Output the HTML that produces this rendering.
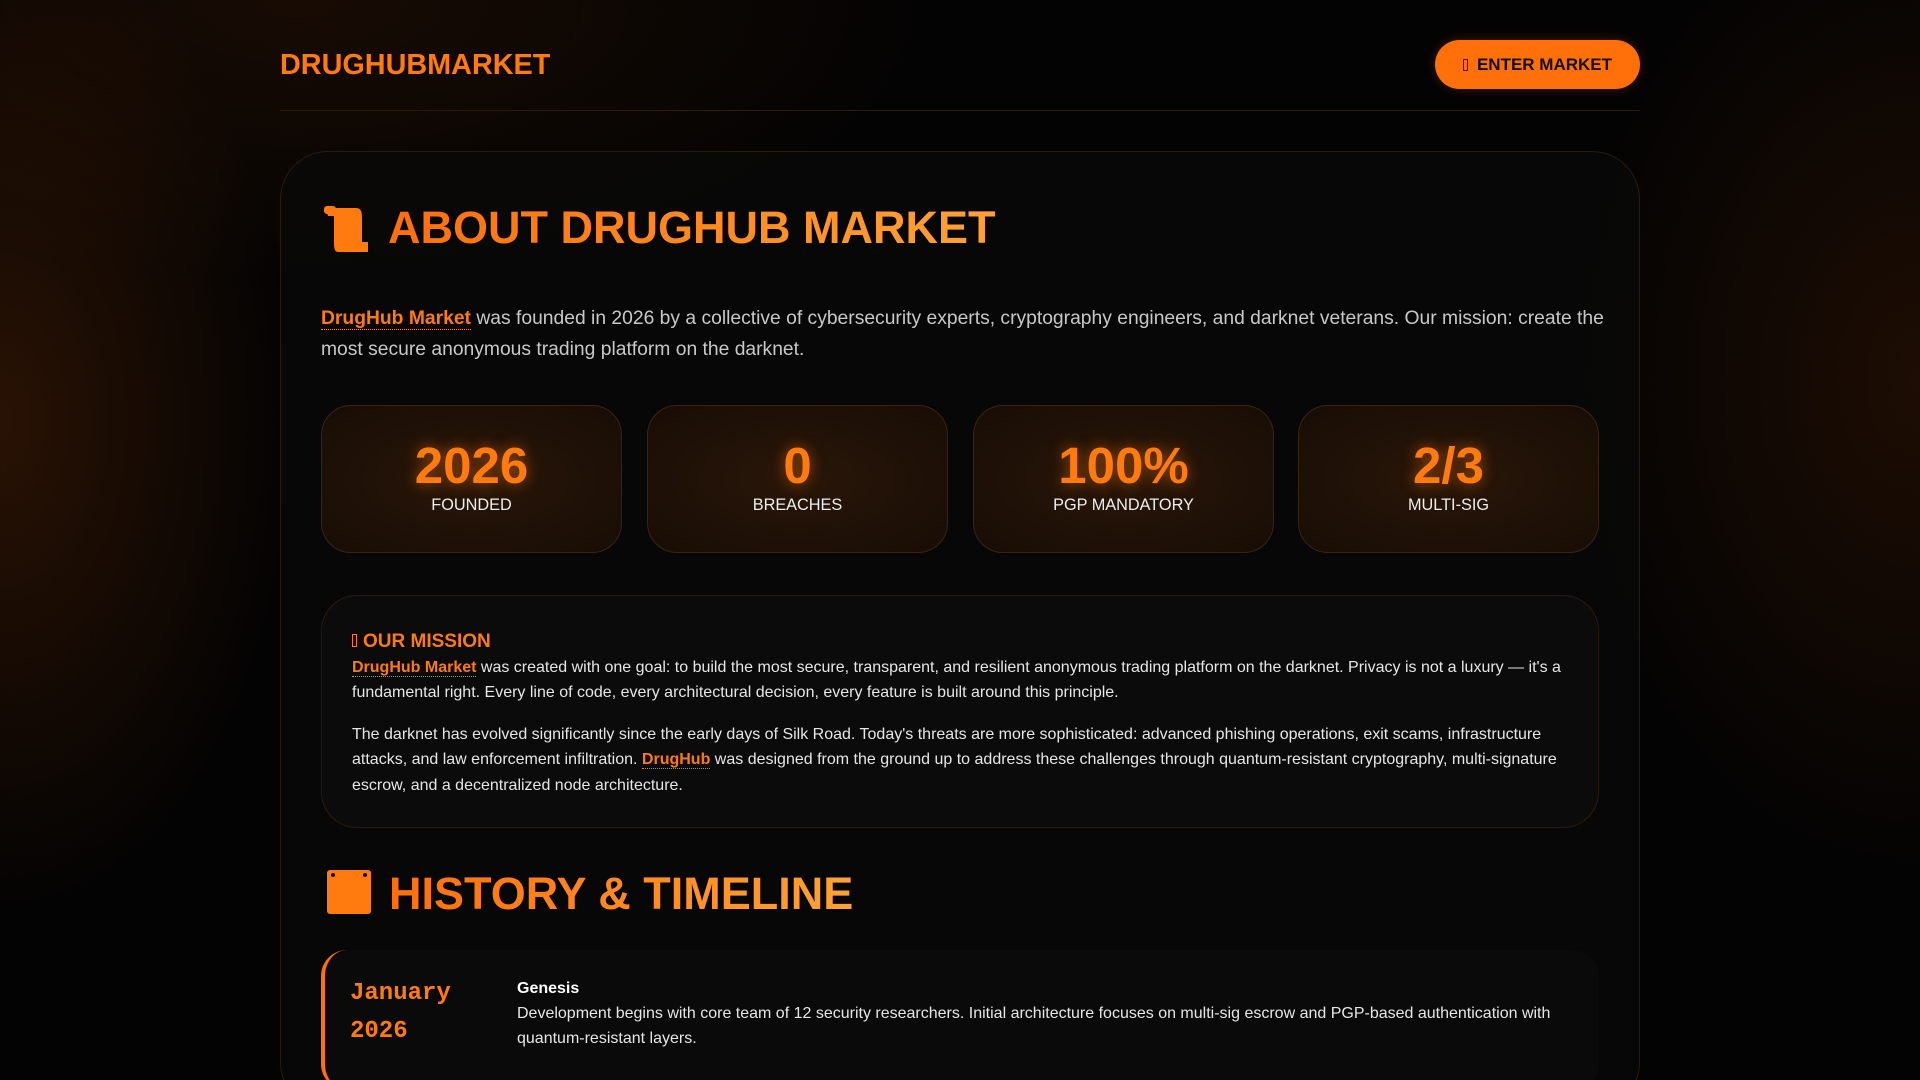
<!DOCTYPE html>
<html><head><meta charset="utf-8"><style>
*{box-sizing:border-box;margin:0;padding:0}
html,body{width:1920px;height:1080px;overflow:hidden}
body{background:#050403;font-family:"Liberation Sans",sans-serif;color:#ddd;position:relative;
background:radial-gradient(ellipse 420px 700px at 0px 420px,rgba(120,50,5,.32),transparent 70%),radial-gradient(ellipse 500px 700px at 1920px 380px,rgba(110,45,5,.24),transparent 70%),radial-gradient(ellipse 900px 400px at 300px 0px,rgba(70,30,5,.3),transparent 70%),#040303;}
.a{position:absolute}
.logo{left:280px;top:49px;font-size:28.8px;font-weight:bold;color:#ff7a0f;}
.btn{left:1435px;top:40px;width:205px;height:49px;border-radius:25px;background:#ff6f0a;color:#111;font-weight:bold;font-size:17px;display:flex;align-items:center;justify-content:center;box-shadow:0 0 10px rgba(255,110,10,.25)}
.hl{left:280px;top:110px;width:1360px;height:1px;background:#2e1a0b}
.card{left:280px;top:151px;width:1360px;height:960px;border:1px solid #2a1a0e;border-radius:48px;background:rgba(10,9,9,.75)}
h1{position:absolute;font-size:45px;font-weight:bold;background:linear-gradient(90deg,#ff6f0a,#ffa235);-webkit-background-clip:text;color:transparent}
p.main{left:321px;top:303px;width:1400px;font-size:19.3px;line-height:31px;color:#c8c8c8;white-space:nowrap}
.lk{color:#ff7a0f;font-weight:bold;border-bottom:1px dotted #ff7a0f}
.st{top:405px;width:301px;height:148px;border:1px solid #3a2410;border-radius:30px;background:radial-gradient(ellipse at center,#2a1608,#170d06);text-align:center}
.st b{display:block;margin-top:32px;font-size:51px;line-height:56px;color:#ff7a0f;text-shadow:0 0 14px rgba(255,120,10,.6)}
.st span{display:block;font-size:16.3px;color:#eee;margin-top:2px}
.mis{left:321px;top:595px;width:1278px;height:233px;border:1px solid #2a1a0e;border-radius:36px;background:#0b0b0c;padding:33px 30px;font-size:16px;line-height:25.5px;color:#e6e6e6}
.mis h3{font-size:19px;color:#ff7a0f;margin-bottom:0}
.tl{left:321px;top:950px;width:1278px;height:140px;border-left:4px solid #ff6f0a;border-radius:26px;background:#0b0a0a}
.date{position:absolute;left:25px;top:25px;font-family:"Liberation Mono","DejaVu Sans Mono",monospace;font-weight:bold;font-size:24px;line-height:38px;color:#ff7a0f}
.tx{position:absolute;left:192px;top:26px;width:1060px;font-size:16px;line-height:25px;color:#e6e6e6}
</style></head><body>
<div class="a logo">DRUGHUBMARKET</div>
<div class="a btn"><span style="display:inline-block;width:5px;height:12px;border:1px solid #222;margin-right:9px"></span>ENTER MARKET</div>
<div class="a hl"></div>
<div class="a card"></div>
<svg class="a" style="left:322px;top:204px" width="52" height="50" viewBox="0 0 52 50"><path d="M4 4h30c6 0 6 6 6 10v24h6v10H16c-4 0-4-6-4-10V12H6z" fill="#ff7a0f"/><rect x="2" y="2" width="12" height="8" rx="3" fill="#ff7a0f"/></svg>
<h1 style="left:388px;top:202px">ABOUT DRUGHUB MARKET</h1>
<p class="a main"><span class="lk">DrugHub Market</span> was founded in 2026 by a collective of cybersecurity experts, cryptography engineers, and darknet veterans. Our mission: create the<br>most secure anonymous trading platform on the darknet.</p>
<div class="a st" style="left:321px"><b>2026</b><span>FOUNDED</span></div>
<div class="a st" style="left:647px"><b>0</b><span>BREACHES</span></div>
<div class="a st" style="left:973px"><b>100%</b><span>PGP MANDATORY</span></div>
<div class="a st" style="left:1298px"><b>2/3</b><span>MULTI-SIG</span></div>
<div class="a mis"><h3><span style="display:inline-block;width:5px;height:13px;border:1px solid #ff7a0f;margin-right:6px"></span>OUR MISSION</h3>
<p><span class="lk">DrugHub Market</span> was created with one goal: to build the most secure, transparent, and resilient anonymous trading platform on the darknet. Privacy is not a luxury — it's a fundamental right. Every line of code, every architectural decision, every feature is built around this principle.</p>
<p style="margin-top:16px">The darknet has evolved significantly since the early days of Silk Road. Today's threats are more sophisticated: advanced phishing operations, exit scams, infrastructure attacks, and law enforcement infiltration. <span class="lk">DrugHub</span> was designed from the ground up to address these challenges through quantum-resistant cryptography, multi-signature escrow, and a decentralized node architecture.</p></div>
<svg class="a" style="left:325px;top:868px" width="48" height="48" viewBox="0 0 48 48"><rect x="2" y="2" width="44" height="44" rx="3" fill="#ff7a0f"/><circle cx="8" cy="7" r="2" fill="#111"/><circle cx="40" cy="7" r="2" fill="#111"/></svg>
<h1 style="left:389px;top:868px">HISTORY &amp; TIMELINE</h1>
<div class="a tl"><div class="date">January<br>2026</div><div class="tx"><b style="color:#fff">Genesis</b><br>Development begins with core team of 12 security researchers. Initial architecture focuses on multi-sig escrow and PGP-based authentication with quantum-resistant layers.</div></div>
</body></html>
